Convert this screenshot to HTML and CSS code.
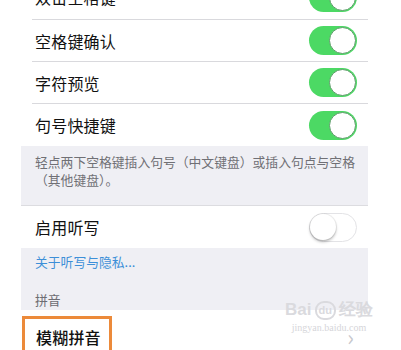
FILE: index.html
```html
<!DOCTYPE html>
<html lang="zh">
<head>
<meta charset="utf-8">
<link rel="stylesheet" href="styles.css">
</head>
<body>
<div class="panel">
  <div class="row row-first"><div class="inner"><span class="label">双击空格键</span><span class="toggle on"></span></div></div>
  <div class="row"><div class="inner"><span class="label">空格键确认</span><span class="toggle on"></span></div></div>
  <div class="row"><div class="inner"><span class="label">字符预览</span><span class="toggle on"></span></div></div>
  <div class="row"><div class="inner last"><span class="label">句号快捷键</span><span class="toggle on"></span></div></div>
  <div class="footer">轻点两下空格键插入句号（中文键盘）或插入句点与空格<br>（其他键盘）。</div>
  <div class="row"><div class="inner last"><span class="label">启用听写</span><span class="toggle off"></span></div></div>
  <div class="gray-block">
    <div class="link">关于听写与隐私...</div>
    <div class="section-head">拼音</div>
  </div>
  <div class="row row-last"><div class="inner last"><span class="label highlight">模糊拼音</span><span class="chev">›</span></div></div>
  <div class="topbar"></div>
</div>
<div class="watermark"><div class="wm-logo">Bai<span class="paw">du</span>经验</div><div class="wm-url">jingyan.baidu.com</div></div>
</body>
</html>
```
FILE: styles.css
```css
html, body {
  margin: 0;
  padding: 0;
  background: #ffffff;
  overflow: hidden;
  width: 401px;
  height: 350px;
  font-family: "Noto Sans CJK SC", "Noto Sans", sans-serif;
}
.panel {
  position: relative;
  margin-left: 21px;
  width: 347px;
  background: #efeff4;
}
.row {
  background: #ffffff;
  padding-left: 11px;
  height: 42px;
}
.row-first {
  margin-top: -25px;
  height: 45px;
}
.row-first .inner {
  height: 44px;
}
.inner {
  height: 41px;
  border-bottom: 1px solid #d9d9dd;
  display: flex;
  align-items: center;
  justify-content: space-between;
  padding-left: 3px;
  padding-right: 11px;
}
.inner.last {
  border-bottom: none;
  height: 42px;
}
.label {
  font-size: 16px;
  color: #111;
  letter-spacing: 0.2px;
}
.toggle {
  width: 48px;
  height: 29px;
  border-radius: 15px;
  box-sizing: border-box;
  position: relative;
  flex: none;
}
.toggle.on {
  background: #4cd964;
}
.toggle.on::after {
  content: "";
  position: absolute;
  right: 1px;
  top: 1px;
  width: 27px;
  height: 27px;
  border-radius: 50%;
  background: #fff;
  box-sizing: border-box;
  border: 1.5px solid #5e9c6a;
}
.toggle.off {
  background: #fff;
  border: 1.5px solid #e3e3e6;
}
.toggle.off::after {
  content: "";
  position: absolute;
  left: 0px;
  top: 0px;
  width: 26px;
  height: 26px;
  border-radius: 50%;
  background: #fff;
  box-shadow: 0 2px 3px rgba(0,0,0,0.25), 0 0 0 1px rgba(0,0,0,0.06);
}
.footer {
  height: 60px;
  box-sizing: border-box;
  padding: 7px 0 0 14px;
  font-size: 12.8px;
  line-height: 18px;
  color: #707075;
  white-space: nowrap;
  border-bottom: 1px solid #dcdce0;
}
.gray-block {
  height: 62px;
  box-sizing: border-box;
  padding: 5px 14px 0 14px;
}
.link {
  font-size: 12.8px;
  line-height: 18px;
  color: #3d8fd8;
  height: 30px;
}
.section-head {
  margin-top: 8px;
  font-size: 12.8px;
  line-height: 18px;
  color: #6d6d72;
}
.row-last {
  padding-left: 0;
}
.row-last .inner {
  padding-left: 0;
  padding-right: 14px;
  align-items: stretch;
}
.highlight {
  border: 3px solid #ec8a3a;
  border-bottom: none;
  padding: 3px 8px 0 11px;
  margin-left: 1px;
  margin-top: 6px;
  display: flex;
  align-items: center;
  font-weight: 500;
}
.chev {
  font-size: 22px;
  line-height: 22px;
  color: #c7c7cc;
  align-self: center;
  margin-top: 10px;
}
.topbar {
  position: absolute;
  left: 0;
  top: 0;
  width: 347px;
  height: 6px;
  background: rgba(238,238,242,0.92);
  border-bottom: 1px solid #e0e0e4;
}
.watermark {
  position: absolute;
  left: 283px;
  top: 300px;
  width: 92px;
  text-align: center;
  white-space: nowrap;
  font-family: "Liberation Sans", sans-serif;
}
.wm-logo {
  font-size: 17px;
  line-height: 20px;
  font-weight: bold;
  color: #dadade;
  display: flex;
  align-items: center;
  justify-content: center;
}
.paw {
  font-size: 11px;
  line-height: 13px;
  border: 2px solid #dadade;
  border-radius: 9px;
  padding: 1px 2px;
  margin: 0 3px;
}
.wm-url {
  font-family: "Liberation Serif", serif;
  font-size: 10px;
  line-height: 12px;
  color: #d6d6da;
  margin-top: 2px;
}
```
